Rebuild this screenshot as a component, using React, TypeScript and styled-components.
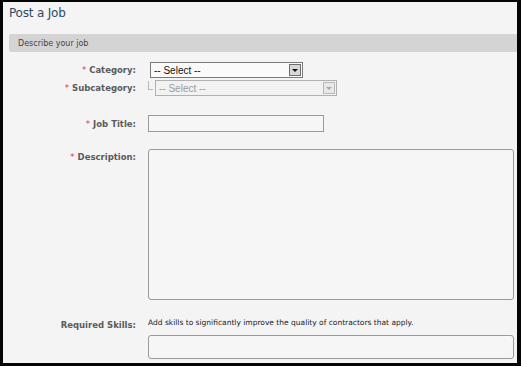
import React from 'react';
import styled, { createGlobalStyle } from 'styled-components';

const GlobalStyle = createGlobalStyle`
  html, body {
    margin: 0;
    padding: 0;
    background: #000;
  }
  * {
    box-sizing: border-box;
  }
`;

const Frame = styled.div`
  width: 521px;
  height: 366px;
  border-style: solid;
  border-color: #050505;
  border-width: 2px 4px 3px 3px;
  background: #f4f4f4;
  overflow: hidden;
  font-family: "DejaVu Sans", Verdana, sans-serif;
`;

const Title = styled.h1`
  margin: 0;
  padding: 4px 0 0 6px;
  height: 32px;
  font-size: 12px;
  font-weight: normal;
  color: #2d4a66;
  letter-spacing: -0.2px;
`;

const SectionBar = styled.div`
  margin-left: 6px;
  height: 18px;
  background: #d4d4d4;
  display: flex;
  align-items: center;
  padding-left: 9px;
  font-size: 8px;
  color: #444;
  border-radius: 2px 0 0 2px;
`;

const Form = styled.div`
  display: grid;
  grid-template-columns: 133px 1fr;
  column-gap: 12px;
  padding-top: 10px;
  padding-right: 3px;
`;

const Label = styled.div<{ $top?: number; $alignTop?: boolean }>`
  margin-top: ${p => p.$top ?? 0}px;
  display: flex;
  justify-content: flex-end;
  align-items: ${p => (p.$alignTop ? 'flex-start' : 'center')};
  padding-top: ${p => (p.$alignTop ? 3 : 0)}px;
  font-size: 8.5px;
  font-weight: bold;
  color: #5a5a5a;
  white-space: nowrap;
`;

const Star = styled.span`
  color: #d04040;
  margin-right: 3px;
  font-weight: normal;
`;

const Field = styled.div<{ $top?: number; $indent?: number }>`
  margin-top: ${p => p.$top ?? 0}px;
  padding-left: ${p => p.$indent ?? 0}px;
  display: flex;
  align-items: center;
`;

const SelectBox = styled.div<{ $width: number; $disabled?: boolean }>`
  width: ${p => p.$width}px;
  height: 16px;
  border: 1px solid ${p => (p.$disabled ? '#b0b0b0' : '#7a7a7a')};
  background: ${p => (p.$disabled ? '#f2f2f2' : '#fafafa')};
  display: flex;
  align-items: center;
  justify-content: space-between;
  padding: 0 1px 0 3px;
  font-family: "Liberation Sans", Arial, sans-serif;
  font-size: 10px;
  color: ${p => (p.$disabled ? '#9a9a9a' : '#111')};
`;

const ArrowButton = styled.span<{ $disabled?: boolean }>`
  width: 12px;
  height: 12px;
  border: 1px solid ${p => (p.$disabled ? '#b8b8b8' : '#6e6e6e')};
  background: ${p => (p.$disabled ? '#e8e8e8' : '#d8d8d8')};
  display: flex;
  align-items: center;
  justify-content: center;
  &::after {
    content: '';
    border-left: 3px solid transparent;
    border-right: 3px solid transparent;
    border-top: 3px solid ${p => (p.$disabled ? '#a8a8a8' : '#111')};
  }
`;

const Connector = styled.span`
  width: 5px;
  height: 9px;
  margin: -6px 2px 0 0;
  border-left: 1px solid #b8b8b8;
  border-bottom: 1px solid #b8b8b8;
`;

const TextInput = styled.div<{ $width?: number; $height: number; $radius?: number }>`
  width: ${p => (p.$width ? `${p.$width}px` : '100%')};
  height: ${p => p.$height}px;
  border: 1px solid #9a9a9a;
  border-radius: ${p => p.$radius ?? 0}px;
  background: #f6f6f6;
`;

const SkillsBlock = styled.div<{ $top?: number }>`
  margin-top: ${p => p.$top ?? 0}px;
  display: flex;
  flex-direction: column;
  gap: 7px;
`;

const Hint = styled.div`
  font-size: 7.5px;
  color: #222;
  height: 11px;
  display: flex;
  align-items: center;
  white-space: nowrap;
`;

const Required: React.FC<{ text: string }> = ({ text }) => (
  <>
    <Star>*</Star>
    {text}
  </>
);

export default function App() {
  return (
    <>
      <GlobalStyle />
      <Frame>
        <Title>Post a Job</Title>
        <SectionBar>Describe your job</SectionBar>
        <Form>
          <Label>
            <Required text="Category:" />
          </Label>
          <Field $indent={2}>
            <SelectBox $width={153}>
              -- Select --
              <ArrowButton />
            </SelectBox>
          </Field>

          <Label $top={2}>
            <Required text="Subcategory:" />
          </Label>
          <Field $top={2}>
            <Connector />
            <SelectBox $width={182} $disabled>
              -- Select --
              <ArrowButton $disabled />
            </SelectBox>
          </Field>

          <Label $top={19}>
            <Required text="Job Title:" />
          </Label>
          <Field $top={19}>
            <TextInput $width={176} $height={17} />
          </Field>

          <Label $top={17} $alignTop>
            <Required text="Description:" />
          </Label>
          <Field $top={17}>
            <TextInput $height={151} $radius={3} />
          </Field>

          <Label $top={17} $alignTop>
            Required Skills:
          </Label>
          <SkillsBlock $top={17}>
            <Hint>Add skills to significantly improve the quality of contractors that apply.</Hint>
            <TextInput $height={24} $radius={3} />
          </SkillsBlock>
        </Form>
      </Frame>
    </>
  );
}
